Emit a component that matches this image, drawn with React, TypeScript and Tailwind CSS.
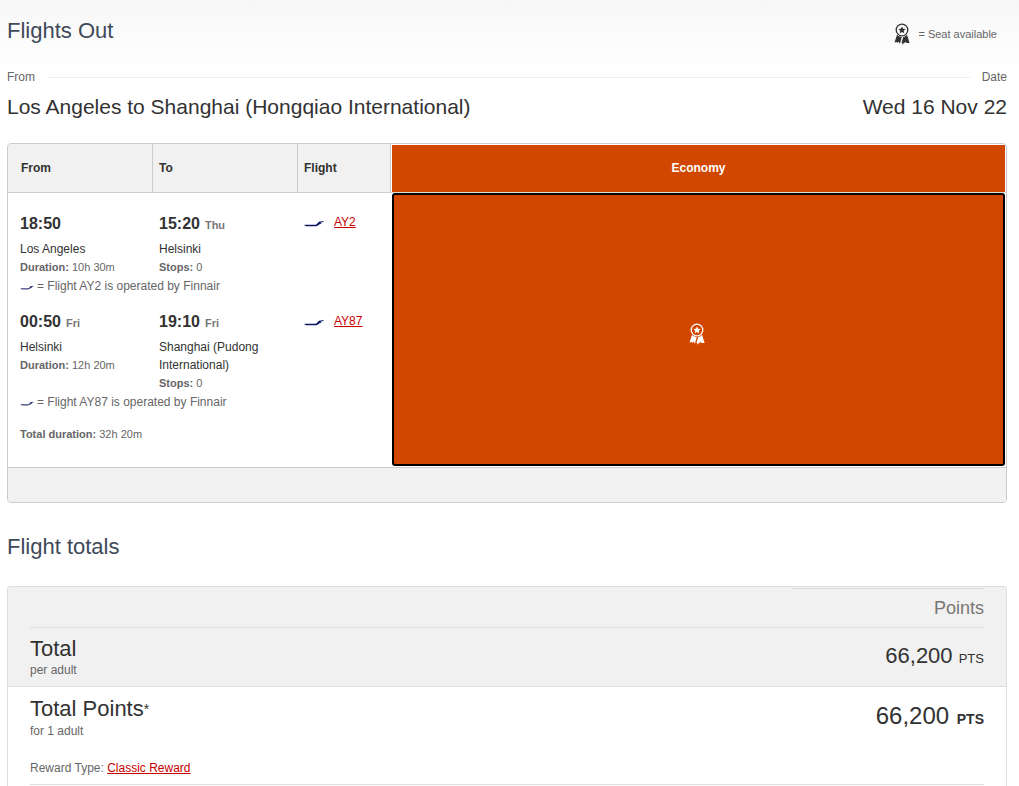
import React from 'react';

interface Segment {
  flight: string;
  departs: string;
  departsDay?: string;
  from: string;
  duration: string;
  arrives: string;
  arrivesDay?: string;
  to: string;
  stops: number;
}

const segments: Segment[] = [
  {
    flight: 'AY2',
    departs: '18:50',
    from: 'Los Angeles',
    duration: '10h 30m',
    arrives: '15:20',
    arrivesDay: 'Thu',
    to: 'Helsinki',
    stops: 0,
  },
  {
    flight: 'AY87',
    departs: '00:50',
    departsDay: 'Fri',
    from: 'Helsinki',
    duration: '12h 20m',
    arrives: '19:10',
    arrivesDay: 'Fri',
    to: 'Shanghai (Pudong International)',
    stops: 0,
  },
];

function RewardIcon({ className }: { className?: string }) {
  return (
    <svg viewBox="0 0 18 22" width="18" height="22" className={className} fill="currentColor" aria-hidden="true">
      <circle cx="9" cy="7" r="5.800" fill="none" stroke="currentColor" strokeWidth="1.300" />
      <path d="M9 3.500l1.100 2.300 2.500.3-1.800 1.700.4 2.500L9 9.100l-2.200 1.200.4-2.500-1.800-1.700 2.500-.3z" />
      <path d="M4 11.700c1.200 1.300 2.700 2.100 4.700 2.200L7 20.800l-1.600-2.200-.7 1.400-.9-1-2.300.6z" />
      <path d="M14 11.700c-1 1.200-2.200 1.900-3.700 2.200l-1.700 5.300 1.300 2.500 1.300-2.600.5 1.300 1.100-1.700.8 1.400 3-.2z" />
    </svg>
  );
}

function FinnairMark({ className }: { className?: string }) {
  return (
    <svg viewBox="0 0 20 7" className={className} fill="currentColor" aria-hidden="true">
      <path d="M.3 4.700h10.400c1.200 0 2-.4 2.700-1.300.9-1.300 1.900-1.900 3.400-1.900l2.900-.5-.4 1.100-2.300.3-.8.8 1.400.1-.5.8-1.700.1C14.200 5.600 12.900 6.200 10.900 6.200H3.200C1.900 6.200.9 5.700.3 4.700z" />
    </svg>
  );
}

function Time({ time, day }: { time: string; day?: string }) {
  return (
    <div className="mb-1.5 flex h-5 items-baseline gap-[5px] text-base leading-5 font-bold text-[#323232]">
      <span>{time}</span>
      {day && <span className="text-[11px] text-[#777]">{day}</span>}
    </div>
  );
}

function Detail({ label, value }: { label: string; value: string | number }) {
  return (
    <div className="text-[11px] leading-[18px] text-[#666]">
      <b>{label}:</b> {value}
    </div>
  );
}

function FlightsTable() {
  return (
    <div className="mt-[22px] overflow-hidden rounded border border-[#ccc]">
      <table className="w-full table-fixed border-separate border-spacing-0 text-left">
        <colgroup>
          <col className="w-[145px]" />
          <col className="w-[145px]" />
          <col className="w-[93px]" />
          <col />
        </colgroup>
        <thead>
          <tr className="h-[49px] text-xs text-[#323232]">
            <th className="border-r border-b border-[#ccc] bg-[#f1f1f1] p-0 pl-[13px]">From</th>
            <th className="border-r border-b border-[#ccc] bg-[#f1f1f1] p-0 pl-1.5">To</th>
            <th className="border-r border-b border-[#ccc] bg-[#f1f1f1] p-0 pl-1.5">Flight</th>
            <th className="h-px border-b border-[#ddd] p-0 px-px pt-px text-center">
              <div className="flex h-full items-center justify-center bg-[#d24700] pb-0.5 text-white">Economy</div>
            </th>
          </tr>
        </thead>
        <tbody>
          {segments.map((segment, index) => (
            <React.Fragment key={segment.flight}>
              <tr className="align-top">
                <td className={index === 0 ? 'p-0 pt-[21px] pl-3' : 'p-0 pt-px pl-3'}>
                  <Time time={segment.departs} day={segment.departsDay} />
                  <div className="text-xs leading-[18px] text-[#323232]">{segment.from}</div>
                  <Detail label="Duration" value={segment.duration} />
                </td>
                <td className={index === 0 ? 'p-0 px-1.5 pt-[21px]' : 'p-0 px-1.5 pt-px'}>
                  <Time time={segment.arrives} day={segment.arrivesDay} />
                  <div className="text-xs leading-[18px] text-[#323232]">{segment.to}</div>
                  <Detail label="Stops" value={segment.stops} />
                </td>
                <td className={index === 0 ? 'p-0 pt-5 pl-1.5' : 'p-0 pt-px pl-1.5'}>
                  <div className="flex items-center gap-2.5 text-xs leading-[18px]">
                    <FinnairMark className="mt-0.5 h-[7px] w-5 text-[#0b1560]" />
                    <a href="#" className="text-[#c80000] underline">
                      {segment.flight}
                    </a>
                  </div>
                </td>
                {index === 0 && (
                  <td rowSpan={5} className="h-px p-0 px-px pb-px">
                    <button
                      type="button"
                      aria-label="Select Economy reward seat"
                      className="flex h-full w-full items-center justify-center rounded-[3px] border-2 border-black bg-[#d24700] pt-2 pr-1 text-white"
                    >
                      <RewardIcon />
                    </button>
                  </td>
                )}
              </tr>
              <tr>
                <td colSpan={3} className="p-0 pb-[15px] pl-3">
                  <div className="flex items-center gap-[3px] text-xs leading-5 text-[#666]">
                    <FinnairMark className="mt-0.5 h-[5px] w-3.5 text-[#3a3f78]" />
                    <span>= Flight {segment.flight} is operated by Finnair</span>
                  </div>
                </td>
              </tr>
            </React.Fragment>
          ))}
          <tr>
            <td colSpan={3} className="p-0 pb-[26px] pl-3 text-[11px] leading-[14px] text-[#666]">
              <b>Total duration:</b> 32h 20m
            </td>
          </tr>
        </tbody>
        <tfoot>
          <tr>
            <td colSpan={4} className="h-[35px] border-t border-[#ccc] bg-[#f1f1f1] p-0"></td>
          </tr>
        </tfoot>
      </table>
    </div>
  );
}

function TotalsTable() {
  return (
    <div className="mt-[25px] overflow-hidden rounded-t border border-b-0 border-[#ddd]">
      <table className="w-full table-fixed border-separate border-spacing-0 text-left text-[#323232]">
        <colgroup>
          <col />
          <col className="w-[214px]" />
        </colgroup>
        <thead className="bg-[#f1f1f1]">
          <tr>
            <td className="p-0 pt-px pl-[22px]">
              <div className="h-10 border-b border-[#ddd]"></div>
            </td>
            <th scope="col" className="p-0 pt-px pr-[22px] text-right text-lg font-normal text-[#777]">
              <div className="h-10 border-y border-[#ddd] leading-[38px]">Points</div>
            </th>
          </tr>
        </thead>
        <tbody>
          <tr className="bg-[#f1f1f1]">
            <th scope="row" className="border-b border-[#ddd] p-0 pt-2 pb-[7px] pl-[22px] font-normal">
              <div className="text-[22px] leading-[25px]">Total</div>
              <div className="text-xs leading-[18px] text-[#666]">per adult</div>
            </th>
            <td className="border-b border-[#ddd] p-0 pr-[22px] text-right text-[22px] leading-[26px]">
              66,200 <span className="text-[13px]">PTS</span>
            </td>
          </tr>
          <tr>
            <th scope="row" className="p-0 pt-2 pl-[22px] font-normal">
              <div className="h-[27px] text-[22px] leading-[27px]">
                Total Points<span className="align-[2px] text-sm">*</span>
              </div>
              <div className="text-xs leading-[18px] text-[#666]">for 1 adult</div>
            </th>
            <td className="p-0 pt-1 pr-[22px] text-right text-2xl leading-7">
              66,200 <span className="ml-px text-sm font-bold">PTS</span>
            </td>
          </tr>
          <tr>
            <td colSpan={2} className="p-0 px-[22px] pb-px">
              <div className="border-b border-[#ddd] pt-[19px] pb-[7px] text-xs leading-[18px] text-[#666]">
                Reward Type:{' '}
                <a href="#" className="text-[#c80000] underline">
                  Classic Reward
                </a>
              </div>
            </td>
          </tr>
        </tbody>
      </table>
    </div>
  );
}

export default function App() {
  return (
    <main className="bg-linear-to-b from-[#f7f7f7] to-white to-[72px] pr-3 pl-[7px] font-['Liberation_Sans',Arial,sans-serif]">
      <header className="flex items-center justify-between pt-[17px]">
        <h1 className="text-[22px] leading-7 text-[#3f4a59]">Flights Out</h1>
        <div className="flex items-center gap-[7px] pt-1.5 pr-2.5 text-[11px] leading-5 text-[#666]">
          <RewardIcon className="text-[#323232]" />
          <span>= Seat available</span>
        </div>
      </header>

      <div className="mt-[23px] flex items-center gap-3 text-xs leading-[18px] text-[#666]">
        <span>From</span>
        <div className="h-px flex-1 bg-[#eee]"></div>
        <span>Date</span>
      </div>
      <div className="mt-[7px] flex justify-between text-[21px] leading-7 text-[#323232]">
        <h2>Los Angeles to Shanghai (Hongqiao International)</h2>
        <span>Wed 16 Nov 22</span>
      </div>

      <FlightsTable />

      <h2 className="mt-[30px] text-[22px] leading-7 text-[#3f4a59]">Flight totals</h2>
      <TotalsTable />
    </main>
  );
}
